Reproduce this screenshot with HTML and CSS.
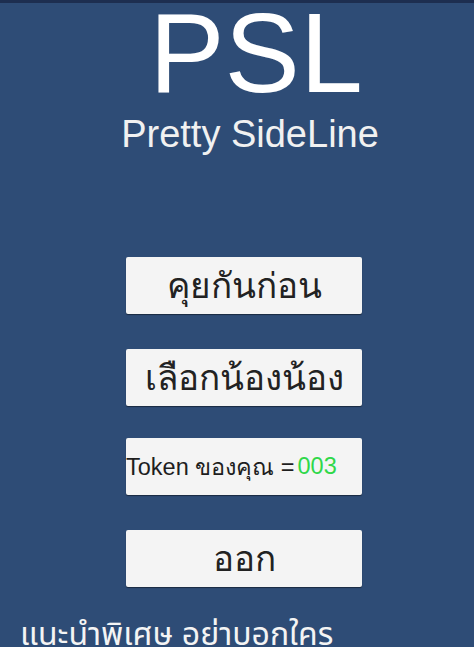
FILE: index.html
```html
<!DOCTYPE html>
<html lang="th">
<head>
<meta charset="utf-8">
<title>PSL</title>
<link rel="stylesheet" href="styles.css">
</head>
<body>
<div class="topbar"></div>
<main class="screen">
  <h1 class="logo">PSL</h1>
  <p class="subtitle">Pretty SideLine</p>
  <div class="menu">
    <button class="btn btn-chat">คุยกันก่อน</button>
    <button class="btn btn-pick">เลือกน้องน้อง</button>
    <div class="btn btn-token"><span class="token-label">Token ของคุณ =</span><span class="token-value">003</span></div>
    <button class="btn btn-exit">ออก</button>
  </div>
  <p class="note">แนะนำพิเศษ อย่าบอกใคร</p>
</main>
</body>
</html>
```
FILE: styles.css
```css
html, body {
  margin: 0;
  padding: 0;
  height: 100%;
  overflow: hidden;
}
body {
  background: #2e4c76;
  font-family: "Liberation Sans", Arial, "Noto Sans", "Noto Sans Thai", sans-serif;
}
.topbar {
  height: 3px;
  background: #1d2e50;
}
.screen {
  display: flex;
  flex-direction: column;
  align-items: center;
  padding-left: 14px;
}
.logo {
  margin: 0 0 0 24px;
  font-weight: normal;
  font-size: 113px;
  line-height: 100px;
  color: #ffffff;
  letter-spacing: 0;
}
.subtitle {
  margin: 12px 0 0 12px;
  font-size: 38px;
  line-height: 38px;
  color: #f1f1f1;
}
.menu {
  margin-top: 104px;
  display: flex;
  flex-direction: column;
  align-items: center;
}
.btn {
  box-sizing: border-box;
  width: 236px;
  height: 57px;
  border: none;
  border-radius: 2px;
  background: #f4f4f4;
  box-shadow: 0 1px 1px rgba(0, 0, 0, 0.45);
  color: #222222;
  font-family: "Liberation Sans", Arial, "Noto Sans", sans-serif;
  font-size: 35px;
  padding: 0;
  display: flex;
  align-items: center;
  justify-content: center;
}
.btn-pick { margin-top: 35px; }
.btn-token {
  margin-top: 32px;
  justify-content: flex-start;
  font-size: 23.5px;
  white-space: nowrap;
}
.btn-exit { margin-top: 35px; }
.token-label { color: #1e1e1e; }
.token-value {
  color: #2fd84a;
  margin-left: 3px;
}
.note {
  align-self: flex-start;
  margin: 27px 0 0 6px;
  font-size: 32px;
  line-height: 40px;
  color: #f4f4f4;
  white-space: nowrap;
}
```
